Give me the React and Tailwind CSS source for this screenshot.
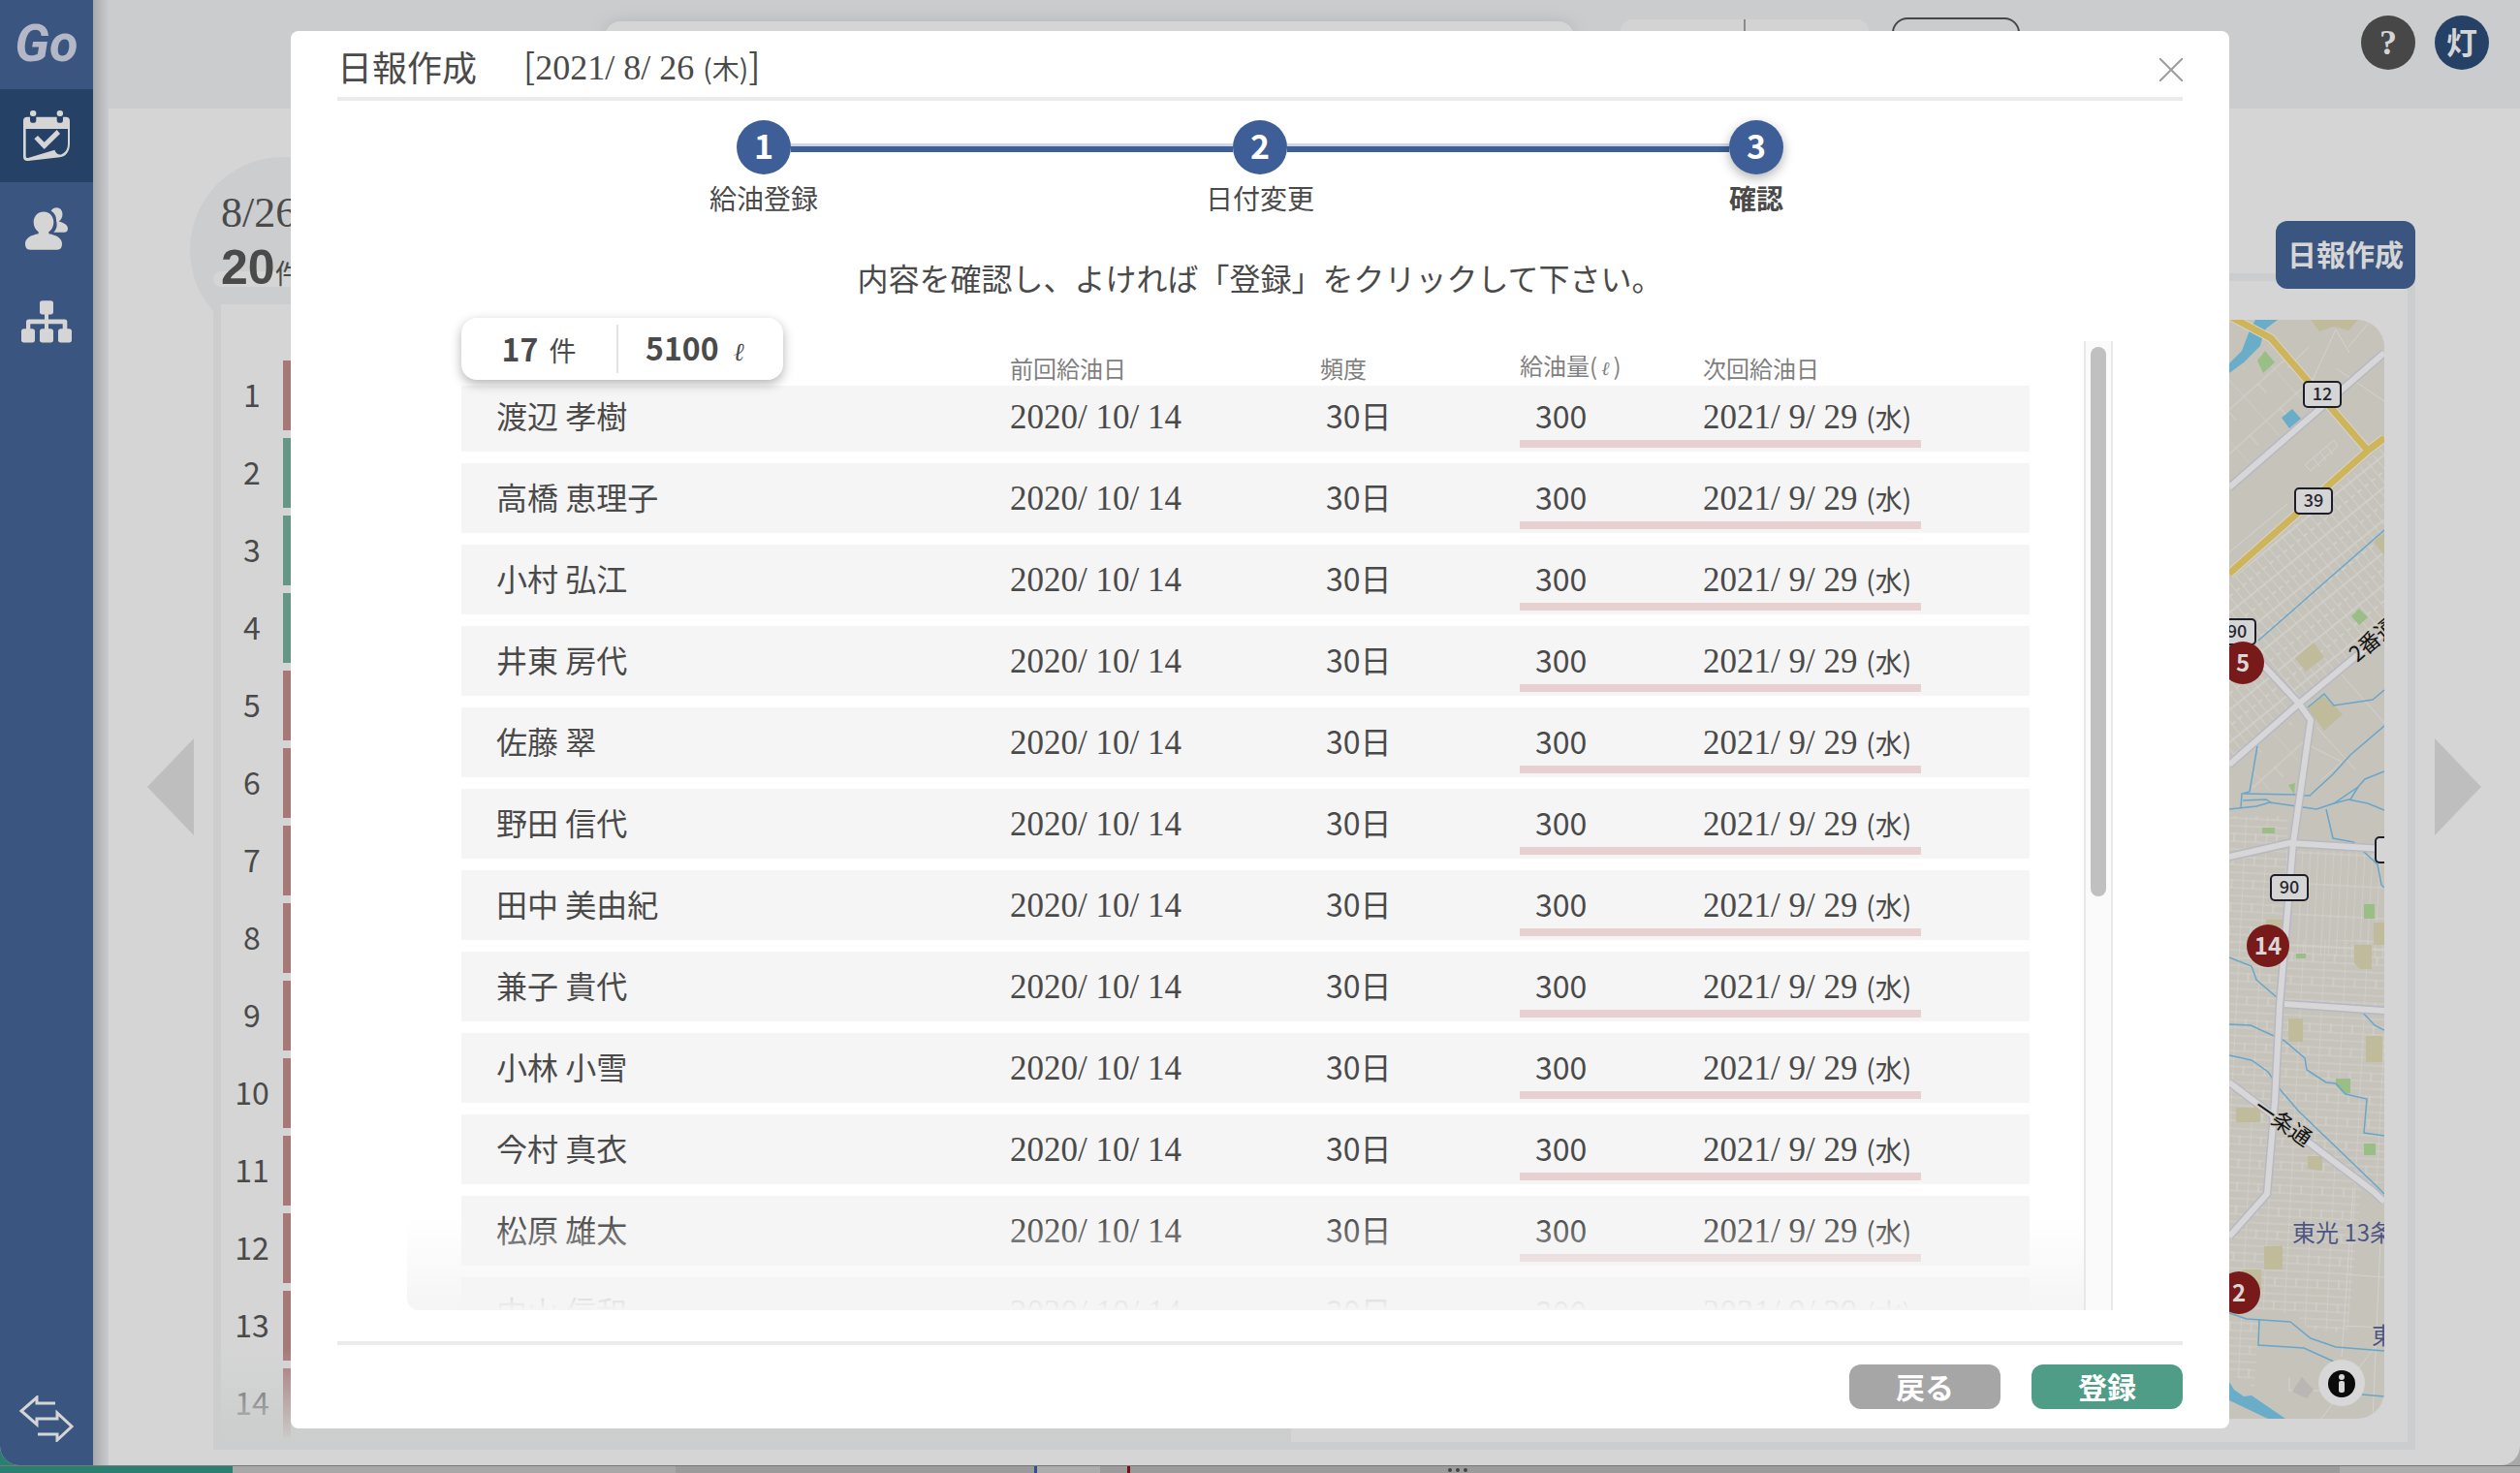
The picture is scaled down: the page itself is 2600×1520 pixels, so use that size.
import React, { useState } from 'react';

const NAMES = [
  '渡辺 孝樹',
  '高橋 恵理子',
  '小村 弘江',
  '井東 房代',
  '佐藤 翠',
  '野田 信代',
  '田中 美由紀',
  '兼子 貴代',
  '小林 小雪',
  '今村 真衣',
  '松原 雄太',
  '中山 信和',
];

const ROWS = NAMES.map((name, id) => ({
  id,
  name,
  last: '2020/ 10/ 14',
  cycle: '30日',
  amount: 300,
  next: '2021/ 9/ 29',
  weekday: '(水)',
}));

const STOPS = Array.from({ length: 14 }, (_, i) => ({
  no: i + 1,
  done: i > 0 && i < 4,
}));

const STEPS = ['給油登録', '日付変更', '確認'];

const SERIF = "font-['Liberation_Serif','Noto_Sans_CJK_JP',serif]";

export default function App() {
  const [open, setOpen] = useState(true);

  return (
    <div className="relative flex h-screen flex-col overflow-hidden bg-linear-to-r from-[#2a8070] from-10% to-[#a9a9a9] to-10% font-['Noto_Sans_CJK_JP',sans-serif] text-[#4a4a4a]">
      <div className="flex min-h-0 flex-1 overflow-hidden rounded-b-[20px] bg-[#d5d5d5]">
        <Sidebar />
        <div className="w-4 shrink-0 bg-linear-to-r from-[#a8a8a8] to-[#c9cbcf]" />
        <div className="flex min-w-0 flex-1 flex-col">
          <TopBar />
          <main className="flex min-h-0 flex-1 items-center">
            <button aria-label="前へ" className="mr-5 ml-10 shrink-0">
              <svg width="48" height="100" viewBox="0 0 48 100" fill="#bebebe"><path d="M48 0v100L0 50z" /></svg>
            </button>
            <DayPanel />
            <button aria-label="次へ" className="mr-10 ml-5 shrink-0">
              <svg width="48" height="100" viewBox="0 0 48 100" fill="#bebebe"><path d="M0 0v100l48-50z" /></svg>
            </button>
          </main>
        </div>
      </div>
      <DesktopStrip />
      {open && <ReportDialog onClose={() => setOpen(false)} />}
    </div>
  );
}

function Sidebar() {
  return (
    <nav className="flex w-24 shrink-0 flex-col bg-[#3a557f] text-[#d5d5d5]">
      <a href="#home" className="flex h-[92px] items-center justify-center pb-1 font-['Roboto',sans-serif] text-[54px] font-bold text-[#b4b8c6] italic">
        Go
      </a>
      <a href="#schedule" aria-label="予定" className="flex h-24 items-center justify-center bg-[#264166]">
        <CalendarIcon />
      </a>
      <a href="#customers" aria-label="顧客" className="flex h-24 items-center justify-center">
        <PeopleIcon />
      </a>
      <a href="#org" aria-label="組織" className="flex h-24 items-center justify-center">
        <OrgIcon />
      </a>
      <button aria-label="切り替え" className="mt-auto mb-6 flex justify-center">
        <svg width="56" height="48" viewBox="20 40 56 48" fill="none" stroke="currentColor" strokeWidth="3">
          <path d="M57 48H38V42L22 56l16 14V64H59V58L74 72 59 86V80H39" />
        </svg>
      </button>
    </nav>
  );
}

function CalendarIcon() {
  return (
    <svg width="48" height="52" viewBox="72 342 144 156" fill="currentColor">
      <path
        fillRule="evenodd"
        d="M84 362h9v9a9.500 9.500 0 0 0 19 0v-9h64v9a9.500 9.500 0 0 0 19 0v-9h9a12 12 0 0 1 12 12v70c0 26-12 40-31 43l-98 11c-9 1-15-4-15-12V374a12 12 0 0 1 12-12zM80 399v84c0 5 3 7 7 6l82-25c6 14 16 18 24 12 11-5 17-16 17-32v-45z"
      />
      <rect x="93" y="342" width="19" height="18" rx="8" />
      <rect x="176" y="342" width="19" height="18" rx="8" />
      <path d="M106 430l11-10 20 20 39-38 10 12-49 48z" />
    </svg>
  );
}

function PeopleIcon() {
  return (
    <svg width="44" height="44" viewBox="78 642 132 131" fill="currentColor">
      <path d="M158 652c9-13 26-12 33 0 6 14 0 27-9 33 16 4 28 11 28 22 0 8-4 12-11 12h-33c10-10 12-24 8-36 1-13-5-24-16-31z" />
      <path d="M135 655c18 0 31 14 31 32 0 13-6 24-15 30v6c24 4 41 14 41 31 0 13-6 19-16 19H94c-10 0-16-6-16-19 0-17 17-27 41-31v-6c-9-6-15-17-15-30 0-18 13-32 31-32z" />
    </svg>
  );
}

function OrgIcon() {
  return (
    <svg width="52" height="44" viewBox="66 930 156 131" fill="currentColor">
      <rect x="123" y="930" width="42" height="43" rx="8" />
      <rect x="66" y="1017" width="42" height="43" rx="8" />
      <rect x="123" y="1017" width="42" height="43" rx="8" />
      <rect x="180" y="1017" width="42" height="43" rx="8" />
      <path d="M138 970h12v18h50q8 0 8 8v24h-14v-18h-44v18h-12v-18H94v18H81v-24q0-8 8-8h49z" />
    </svg>
  );
}

function TopBar() {
  return (
    <header className="flex h-28 shrink-0 items-start bg-[#cbcccd]">
      <div className="flex flex-1 items-start justify-end pt-5">
        <input
          aria-label="検索"
          className="mt-[2px] h-16 w-[1000px] rounded-2xl bg-[#d5d5d5] shadow-[0_0_16px_#b4b6bc]"
        />
        <div className="ml-12 flex h-16 w-64 overflow-hidden rounded-xl bg-[#d3d3d4]">
          <button aria-label="表" className="w-[129px] border-r-2 border-[#8a8a8a]" />
          <button aria-label="地図" className="flex-1" />
        </div>
        <button aria-label="絞り込み" className="mr-[352px] ml-6 -mt-[2px] h-16 w-[132px] rounded-2xl border-2 border-[#474747]" />
      </div>
      <div className="mt-4 mr-8 flex shrink-0 gap-5">
        <button className="size-14 rounded-full bg-[#474747] font-['Liberation_Serif',serif] text-[36px] leading-14 font-bold text-[#d5d5d5]">?</button>
        <button className="size-14 rounded-full bg-[#264166] pb-1 text-[32px] leading-none font-bold text-[#d5d5d5]">灯</button>
      </div>
    </header>
  );
}

function DayPanel() {
  return (
    <div className="flex min-w-0 flex-1 flex-col self-stretch pt-[116px] pb-4">
      <button className="relative z-10 h-[70px] w-36 shrink-0 self-end rounded-xl bg-[#3a557f] pb-1 text-[30px] font-bold whitespace-nowrap text-[#d5d5d5]">
        日報作成
      </button>
      <section className="relative -mt-4 flex min-h-0 flex-1 border-8 border-[#cbcdcf]">
        {/* date tab sticking out of the panel corner */}
        <div className="absolute -top-32 -left-8 size-48 rounded-full bg-[#cbcdcf]" />
        <div className="absolute -top-[10px] -left-2 h-4 w-48 rounded-full bg-[#d5d5d5]" />
        <div className="absolute -top-[98px] left-0 whitespace-nowrap">
          <p className={`${SERIF} text-[44px] leading-14`}>8/26</p>
          <p className="font-['Liberation_Sans','Noto_Sans_CJK_JP',sans-serif] text-[50px] leading-14 font-bold">
            20<span className="text-[28px] font-normal">件</span>
          </p>
        </div>
        <div className="relative mt-6 flex w-[1104px] shrink-0 flex-col overflow-hidden bg-[#d5d5d5] pt-[58px]">
          <ol className="flex w-[72px] shrink-0 flex-col gap-2">
            {STOPS.map((s) => (
              <li
                key={s.no}
                className={`flex h-[72px] shrink-0 items-center justify-center border-r-8 pb-1 text-[32px] ${s.done ? 'border-[#649786]' : 'border-[#a67878]'}`}
              >
                {s.no}
              </li>
            ))}
          </ol>
          <div className="absolute inset-x-0 bottom-0 h-24 bg-linear-to-b from-[#cbcdcd]/0 to-[#cbcecd]" />
        </div>
        <div className="flex min-w-0 flex-1 pt-10 pr-6 pb-6">
          <AreaMap />
        </div>
      </section>
    </div>
  );
}

const RIVERS = [
  'M160 217L30 331',
  'M81 400l17-14 10 12 40-6 12-10',
  'M160 419l-35 30-18 20-24 22h-6',
  'M29 440l-8 47-8 2-1 14',
  'M15 489l55 1M14 496l24-1 6 4',
  'M0 505l28-3 14-4 48 7 18-6 25-17 7-8 20-8',
  'M108 499l15-4 20 4 17 7M125 495l8-13',
  'M100 505l7 30 21 4 25 23 4 21 3 3',
  'M0 658l23 9 5 14 22 19',
  'M0 727l22 1 35 16 21 18 2 12 20 13 10 1 10 11 22 5-3 35 21 3',
  'M0 759l23 5 17 12 13 19 19 22 78 75 10 10',
  'M137 714l13 14 10 5',
  'M0 1025l18 6 45 3 21 17 26 9 50 4',
  'M31 1031l-1 27 47 3 31 14M137 1109l23 2',
];

const ROADS = [
  'M160 34L0 173',
  'M160 323L72 396 0 459',
  'M20 340L72 396 84 413 66 540 52 708 47 807 39 902 0 946',
  'M0 554l62-14 98 6',
  'M57 706l103 7',
  'M0 787l147 111 13 12',
];

function AreaMap() {
  return (
    <div className="relative flex min-w-0 flex-1 justify-end overflow-hidden rounded-[28px] bg-[#c6c3bb]">
      <svg width="160" height="1134" viewBox="0 0 160 1134" className="shrink-0" fill="none">
        <defs>
          <pattern id="diag" width="9" height="26" patternUnits="userSpaceOnUse" patternTransform="rotate(-39)">
            <path d="M0 0v26M0 1h9M0 14h5" stroke="#d3d2ce" strokeWidth="1.500" />
          </pattern>
          <pattern id="wide" width="42" height="34" patternUnits="userSpaceOnUse" patternTransform="rotate(-42)">
            <path d="M0 0v34M0 1h42M20 0v14" stroke="#d3d2ce" strokeWidth="1" />
          </pattern>
          <pattern id="block" width="22" height="24" patternUnits="userSpaceOnUse" patternTransform="rotate(3)">
            <path d="M0 0v24M0 1h22M0 9h22M0 17h22M11 0v9" stroke="#d3d2ce" strokeWidth="1.200" />
          </pattern>
          <pattern id="tall" width="8" height="32" patternUnits="userSpaceOnUse" patternTransform="rotate(3)">
            <path d="M0 0v32M0 1h8" stroke="#d3d2ce" strokeWidth="1.200" />
          </pattern>
        </defs>
        <path d="M0 60l40-30 45 28 20 15L0 165z" fill="url(#wide)" />
        <path d="M78 150l30-26 4 6-28 26zM86 142l7 9M93 136l7 9M100 130l7 9M60 50l22-22M86 62l24-52 14 24M110 50l50 34M0 240l60-50M123 28l20-24" stroke="#d3d2ce" />
        <path d="M160 130v188L72 390 40 350 0 310v-40z" fill="url(#diag)" />
        <path d="M0 365l30-10 42 41-72 60z" fill="url(#diag)" />
        <path d="M20 440l50-30 12 10-18 66H24z" fill="url(#wide)" />
        <path d="M116 366l44 50M90 420l40 44M84 440l32 16-22 20" stroke="#d3d2ce" />
        <path d="M0 512h60v130H0z" fill="url(#block)" />
        <path d="M68 548h92v110H64z" fill="url(#tall)" />
        <path d="M0 640h160v250l-24 6-14 150-40-4-12-14-70-12z" fill="url(#block)" />
        <path d="M0 1028l30 6-4 68-26-16z" fill="url(#block)" />
        <path d="M128 895l-12 175M120 985l40 3M118 1038l42 2M156 950l-8 184M150 1060l-55 74M62 1105h52M62 1105v-14" stroke="#d3d2ce" />

        <path d="M0 55V45l13-13 8-21L27 0h23L38 9l-4 10-2 8-17 17zM54 101l11-9 9 10-12 10zM0 1096l5 8 10 7 8-1 35 24H40L0 1115z" fill="#69adc9" />
        <path d="M37 32l10 12-12 11-6-13zM134 298l9 9-9 8-8-9zM61 480l7-2-1 12zM34 524h13v6H34zM139 603h11v15h-11zM69 654h10v5H69zM110 783h15v15l-6 1-9-9zM139 850h12v12h-12z" fill="#9abf86" />
        <path d="M84 0h49l-10 11-15-4-15 5zM149 229l11-9v23zM87 333l11 15-19 15-11-14zM97 388l20 19-19 17-17-23zM38 619h17v8H38zM149 622h11v23h-11zM129 645h18v25h-12l-6-6zM61 721h15v24H61zM141 739h17v27h-17zM7 813h25v15H7zM81 863h15v15l-15-2zM36 956h19v24H36zM14 980h19v20H14z" fill="#c0bb9b" />
        <path d="M75 1091l12 13-7 9-15-7z" fill="#bab6b3" />

        {RIVERS.map((d) => <path key={d} d={d} stroke="#67a6cb" strokeWidth="1.500" />)}
        {ROADS.map((d) => <path key={d} d={d} stroke="#b7b8c4" strokeWidth="9" strokeLinejoin="round" />)}
        {ROADS.map((d) => <path key={d} d={d} stroke="#d7d7d8" strokeWidth="6" strokeLinejoin="round" />)}
        <path d="M0-4l43 23 100 116M160 122l-17 13L0 262" stroke="#d8d5cb" strokeWidth="9" />
        <path d="M0-4l43 23 100 116M160 122l-17 13L0 262" stroke="#ceb45b" strokeWidth="7" />

        <RouteShield x={76} y={63} no="12" />
        <RouteShield x={67} y={173} no="39" />
        <RouteShield x={-12} y={308} no="90" />
        <RouteShield x={42} y={572} no="90" />
        <RouteShield x={150} y={533} no="" />

        <g fill="#111" stroke="#c6c3bb" strokeWidth="2" paintOrder="stroke" className="text-[22px]">
          <text transform="translate(132 354) rotate(-40)">2番通</text>
          <text transform="translate(24 816) rotate(35)">一条通</text>
        </g>
        <g fill="#4e5680" stroke="#c9c7c4" strokeWidth="2" paintOrder="stroke" className="text-2xl">
          <text x="65" y="951">東光 13条</text>
          <text x="147" y="1057">東</text>
        </g>

        <Pin x={14} y={354} no="5" />
        <Pin x={40} y={646} no="14" />
        <Pin x={10} y={1004} no="2" />

        <circle cx="116" cy="1097" r="24" fill="#d7d7d7" />
        <circle cx="116" cy="1098" r="14" fill="#0b0b0b" />
        <circle cx="116" cy="1091" r="3" fill="#d7d7d7" />
        <rect x="113" y="1095" width="6" height="12" rx="2" fill="#d7d7d7" />
      </svg>
    </div>
  );
}

function RouteShield({ x, y, no }) {
  return (
    <g>
      <rect x={x + 1} y={y + 1} width="38" height="26" rx="4" fill="#d5d5d5" stroke="#1e1e28" strokeWidth="2" />
      <text x={x + 20} y={y + 20} textAnchor="middle" fill="#26262e" className="text-[18px] font-medium">{no}</text>
    </g>
  );
}

function Pin({ x, y, no }) {
  return (
    <g>
      <circle cx={x} cy={y} r="22" fill="#791a1a" />
      <text x={x} y={y + 9} textAnchor="middle" fill="#d8d8d8" className="text-2xl font-bold">{no}</text>
    </g>
  );
}

function Litre({ className = '' }) {
  return <span className={`font-['DejaVu_Serif',serif] italic ${className}`}>ℓ</span>;
}

function ReportDialog({ onClose }) {
  return (
    <div className="absolute inset-0 flex px-[300px] pt-8 pb-[46px]">
      <div role="dialog" aria-labelledby="report-title" className="flex min-w-0 flex-1 flex-col rounded-lg bg-white px-12 pb-5">
        <div className="flex h-[72px] shrink-0 items-center border-b-4 border-[#ebebeb] pt-1">
          <h1 id="report-title" className="text-[36px] leading-none">日報作成</h1>
          <p className="ml-12 text-[36px] leading-none">
            [<span className={SERIF}>2021/ 8/ 26 </span>
            <span className="text-[28px]">(木)</span>]
          </p>
          <button aria-label="閉じる" onClick={onClose} className="mb-4 ml-auto self-end">
            <svg width="24" height="24" viewBox="0 0 24 24" stroke="#9c9c9c" strokeWidth="2"><path d="M0 0l24 24M24 0L0 24" /></svg>
          </button>
        </div>

        <ol className="mx-auto mt-5 grid w-[1536px] max-w-full shrink-0 grid-cols-3">
          {STEPS.map((label, i) => {
            const last = i === STEPS.length - 1;
            return (
              <li key={label} className="flex flex-col items-center gap-[6px]">
                <div className="flex w-full items-center">
                  <span className={`h-[9px] flex-1 ${i > 0 ? 'border-t-3 border-[#ced6e6] bg-[#3d5e96]' : ''}`} />
                  <span className={`size-14 rounded-full bg-[#3d5e96] text-center text-[34px] leading-13 font-bold text-white ${last ? 'shadow-[0_4px_12px_rgba(0,0,0,0.3)]' : ''}`}>
                    {i + 1}
                  </span>
                  <span className={`h-[9px] flex-1 ${last ? '' : 'border-t-3 border-[#ced6e6] bg-[#3d5e96]'}`} />
                </div>
                <span className={`text-[28px] leading-9 ${last ? 'font-bold' : ''}`}>{label}</span>
              </li>
            );
          })}
        </ol>

        <p className="mt-10 shrink-0 text-center text-[32px] leading-12">
          内容を確認し、よければ「登録」をクリックして下さい。
        </p>

        <div className="relative mx-[72px] mt-[42px] flex min-h-0 flex-1">
          <div className="relative min-w-0 flex-1 overflow-hidden px-14">
            <RefuelTable />
            <div className="absolute inset-x-0 bottom-0 h-24 rounded-bl-xl bg-linear-to-b from-[#f5f5f5]/0 to-[#f5f5f5]" />
          </div>
          <div className="w-[30px] border-x-2 border-[#e8e8e8] bg-[#fafafa] px-[5px] pt-[6px]">
            <div className="h-[567px] rounded-full bg-[#c0c0c0]" />
          </div>
          <div className="absolute -top-6 left-14 z-20 flex h-16 w-[332px] items-center rounded-2xl bg-white py-2 text-[32px] leading-12 shadow-[0_4px_12px_rgba(0,0,0,0.3)]">
            <p className="w-[162px] border-r-2 border-[#e2e2e2] text-center">
              <b>17</b> <span className="ml-1 text-[28px]">件</span>
            </p>
            <p className="flex-1 pl-7">
              <b>5100</b> <Litre className="ml-2 text-[26px]" />
            </p>
          </div>
        </div>

        <div className="mt-8 flex shrink-0 justify-end gap-8 border-t-4 border-[#ebebeb] pt-5">
          <button className="h-[46px] w-[156px] rounded-xl bg-[#a6a6a6] pb-[2px] text-[30px] leading-none font-bold text-white">戻る</button>
          <button className="h-[46px] w-[156px] rounded-xl bg-[#4f9d87] pb-[2px] text-[30px] leading-none font-bold text-white">登録</button>
        </div>
      </div>
    </div>
  );
}

function RefuelTable() {
  const th = 'relative z-10 bg-white p-0 align-bottom leading-7 shadow-[0_4px_0_#fff]';
  const td = 'border-b-12 border-white bg-[#f5f5f5] bg-clip-padding p-0 align-top leading-[68px]';

  return (
    <table className="w-full table-fixed border-separate border-spacing-0 text-left whitespace-nowrap">
      <colgroup>
        <col className="w-[566px]" />
        <col className="w-[320px]" />
        <col className="w-[206px]" />
        <col className="w-[189px]" />
        <col className="w-[225px]" />
        <col />
      </colgroup>
      <thead className="text-2xl text-[#7f7f7f]">
        <tr className="h-[42px] *:font-normal">
          <th className={th}><span className="sr-only">氏名</span></th>
          <th className={th}>前回給油日</th>
          <th className={th}>頻度</th>
          <th className={th}>給油量(<Litre className="mx-1 text-xl" />)</th>
          <th className={th}>次回給油日</th>
          <th className={th} />
        </tr>
      </thead>
      <tbody className="text-[32px]">
        {ROWS.map((r) => (
          <tr key={r.id} className="h-[84px]">
            <td className={`${td} pl-9`}>{r.name}</td>
            <td className={td}>
              <span className={`${SERIF} text-[35px]`}>{r.last}</span>
            </td>
            <td className={`${td} pl-[6px]`}>{r.cycle}</td>
            <td className={td}>
              <div className="h-[68px] border-b-8 border-[#e6d0d0] pl-4">{r.amount}</div>
            </td>
            <td className={td}>
              <div className="h-[68px] border-b-8 border-[#e6d0d0]">
                <span className={`${SERIF} text-[35px]`}>{r.next} </span>
                <span className="text-[28px]">{r.weekday}</span>
              </div>
            </td>
            <td className={td} />
          </tr>
        ))}
      </tbody>
    </table>
  );
}

/* sliver of the windows lying behind the app */
function DesktopStrip() {
  return (
    <div className="flex h-2 shrink-0 border-t border-[#777]">
      <div className="w-60 rounded-br-lg bg-[#2a8070]" />
      <div className="w-[457px] bg-[#a8a8a8]" />
      <div className="w-[370px] bg-[#9b9b9b]" />
      <div className="w-[3px] bg-[#2f5288]" />
      <div className="w-[65px] bg-[#adadad]" />
      <div className="w-7 bg-[#9b9b9b]" />
      <div className="w-[3px] bg-[#7a0d12]" />
      <div className="flex flex-1 items-center gap-1 bg-[#9b9b9b] pl-[328px]">
        <i className="size-1 rounded-full bg-[#444]" />
        <i className="size-1 rounded-full bg-[#444]" />
        <i className="size-1 rounded-full bg-[#444]" />
      </div>
      <div className="w-[186px] bg-[#adadad]" />
    </div>
  );
}
